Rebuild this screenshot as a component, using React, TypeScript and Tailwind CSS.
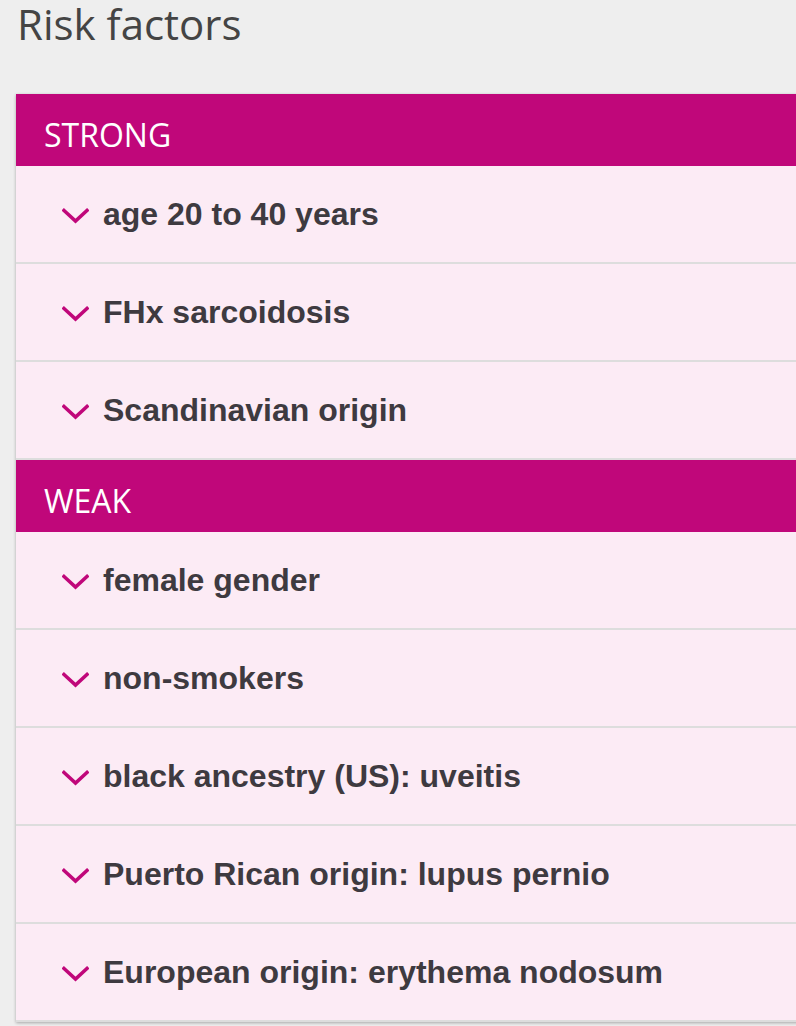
import React from 'react';

const groups = [
  {
    label: 'STRONG',
    items: ['age 20 to 40 years', 'FHx sarcoidosis', 'Scandinavian origin'],
  },
  {
    label: 'WEAK',
    items: [
      'female gender',
      'non-smokers',
      'black ancestry (US): uveitis',
      'Puerto Rican origin: lupus pernio',
      'European origin: erythema nodosum',
    ],
  },
];

function Chevron() {
  return (
    <svg className="mt-[4px] h-[16px] w-[27px] shrink-0" viewBox="0 0 27 16" fill="none">
      <path d="M2 2.5L13.5 13L25 2.5" stroke="#c0077a" strokeWidth={3.6} strokeLinecap="square" />
    </svg>
  );
}

export default function App() {
  return (
    <div className="min-h-[1026px] w-[796px] overflow-hidden bg-[#eeeeee]">
      <h1 className="pl-[17px] pt-[2px] font-['Open_Sans',sans-serif] text-[42px] leading-[44px] font-normal text-[#444]">
        Risk factors
      </h1>
      <div className="ml-[16px] mt-[48px] w-[800px] shadow-[0_1px_3px_rgba(0,0,0,0.3)]">
        {groups.map((g) => (
          <div key={g.label}>
            <div className="flex h-[72px] items-center bg-[#c0077a] pl-[28px] pt-[10px] font-['Open_Sans',sans-serif] text-[32px] text-white">
              {g.label}
            </div>
            {g.items.map((item) => (
              <div
                key={item}
                className="flex h-[98px] items-center gap-[14px] border-b-2 border-[#dddddd] bg-[#fcebf5] pl-[46px]"
              >
                <Chevron />
                <span className="font-['Liberation_Sans',Arial,sans-serif] text-[32px] font-bold text-[#3e3a40]">
                  {item}
                </span>
              </div>
            ))}
          </div>
        ))}
      </div>
    </div>
  );
}
